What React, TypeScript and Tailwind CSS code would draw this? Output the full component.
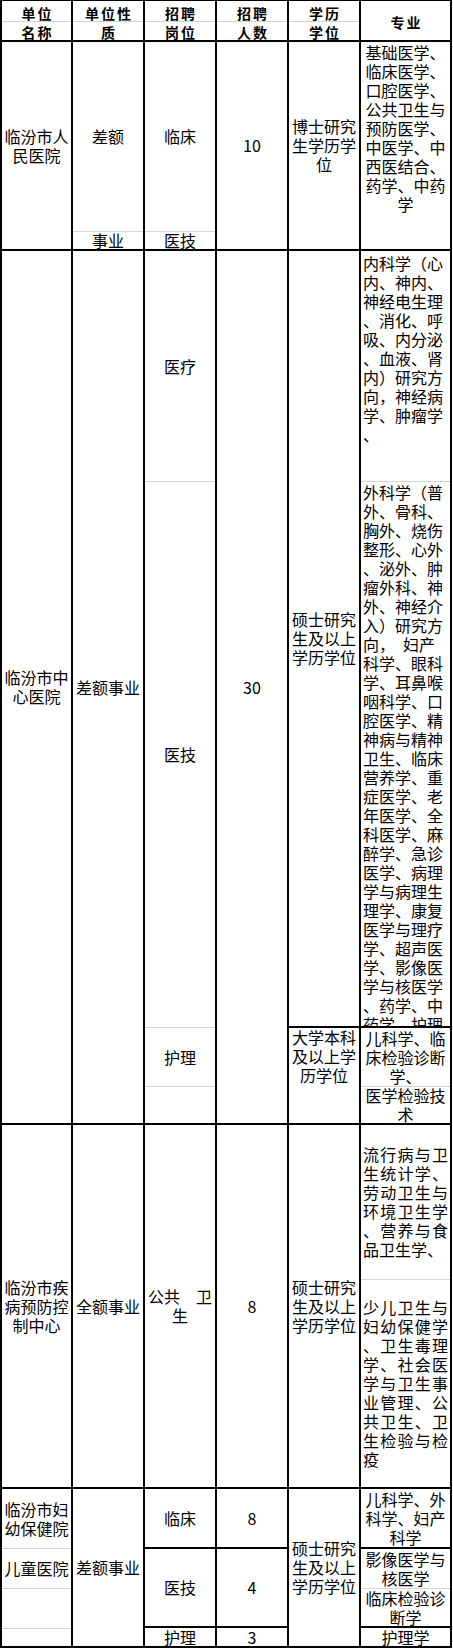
import React from 'react';

// 2px black lines come from the grid gap; 1px grey lines are borders inside cells
const grey = 'border-b border-[#d4d4d4]';

function Lines({ lines, left = false }: { lines: string[]; left?: boolean }) {
  return (
    <div className={left ? 'w-full text-left pl-[2px]' : 'w-full text-center'}>
      {lines.map((l, i) => (
        <div key={i} className="whitespace-pre">
          {l}
        </div>
      ))}
    </div>
  );
}

// Excel "distributed" alignment: every line but the last fills the cell width
function Spread({ lines }: { lines: string[] }) {
  return (
    <div className="w-full px-[2px]">
      {lines.map((l, i) =>
        i < lines.length - 1 ? (
          <div key={i} className="flex justify-between">
            {Array.from(l).map((c, j) => (
              <span key={j}>{c}</span>
            ))}
          </div>
        ) : (
          <div key={i} className="whitespace-pre">
            {l}
          </div>
        )
      )}
    </div>
  );
}

function Cell({ className = '', children }: { className?: string; children?: React.ReactNode }) {
  return (
    <div className={`bg-white overflow-hidden flex items-center justify-center ${className}`}>
      {children}
    </div>
  );
}

function Part({ className = '', children }: { className?: string; children?: React.ReactNode }) {
  return (
    <div className={`w-full shrink-0 overflow-hidden flex items-center justify-center ${className}`}>
      {children}
    </div>
  );
}

function Head({ col, top, bottom }: { col: string; top: string; bottom: string }) {
  return (
    <div className={`${col} row-start-1 bg-white flex flex-col`}>
      <div className={`h-[21px] ${grey} flex items-end justify-center pl-[2px]`}>{top}</div>
      <div className="flex-1 flex items-end justify-center pl-[2px]">{bottom}</div>
    </div>
  );
}

const master = ['硕士研究', '生及以上', '学历学位'];

export default function App() {
  return (
    <div className="w-[452px] bg-white font-['Noto_Sans_CJK_SC',sans-serif] text-black">
      <div className="grid grid-cols-[69px_70px_70px_70px_70px_89px] grid-rows-[39px_207px_775px_95px_362px_58px_77px_18px] gap-[2px] bg-black pt-[1px] px-[2px] pb-[2px] text-[16px] leading-[19px]">
        {/* header */}
        <div className="contents font-bold text-[14px] leading-[16px] tracking-[2px]">
          <Head col="col-start-1" top="单位" bottom="名称" />
          <Head col="col-start-2" top="单位性" bottom="质" />
          <Head col="col-start-3" top="招聘" bottom="岗位" />
          <Head col="col-start-4" top="招聘" bottom="人数" />
          <Head col="col-start-5" top="学历" bottom="学位" />
          <div className="col-start-6 row-start-1 bg-white flex items-center justify-center pl-[2px] pt-[3px]">
            专业
          </div>
        </div>

        {/* 临汾市人民医院 */}
        <Cell className="col-start-1 row-start-2">
          <Lines lines={['临汾市人', '民医院']} />
        </Cell>
        <Cell className="col-start-2 row-start-2 flex-col">
          <Part className={`h-[190px] ${grey}`}>差额</Part>
          <Part className="flex-1">事业</Part>
        </Cell>
        <Cell className="col-start-3 row-start-2 flex-col">
          <Part className={`h-[190px] ${grey}`}>临床</Part>
          <Part className="flex-1">医技</Part>
        </Cell>
        <Cell className="col-start-4 row-start-2">10</Cell>
        <Cell className="col-start-5 row-start-2">
          <Lines lines={['博士研究', '生学历学', '位']} />
        </Cell>
        <Cell className="col-start-6 row-start-2 items-start pt-[1px]">
          <Lines
            lines={['基础医学、', '临床医学、', '口腔医学、', '公共卫生与', '预防医学、', '中医学、中', '西医结合、', '药学、中药', '学']}
          />
        </Cell>

        {/* 临汾市中心医院 */}
        <Cell className="col-start-1 row-start-3 row-span-2">
          <Lines lines={['临汾市中', '心医院']} />
        </Cell>
        <Cell className="col-start-2 row-start-3 row-span-2">差额事业</Cell>
        <Cell className="col-start-3 row-start-3 row-span-2 flex-col justify-start">
          <Part className={`h-[231px] ${grey}`}>医疗</Part>
          <Part className={`h-[546px] ${grey}`}>医技</Part>
          <Part className={`h-[59px] ${grey}`}>护理</Part>
          <Part className="flex-1" />
        </Cell>
        <Cell className="col-start-4 row-start-3 row-span-2">30</Cell>
        <Cell className="col-start-5 row-start-3">
          <Lines lines={master} />
        </Cell>
        <Cell className="col-start-5 row-start-4 items-start">
          <Lines lines={['大学本科', '及以上学', '历学位']} />
        </Cell>
        <Cell className="col-start-6 row-start-3 flex-col justify-start">
          <Part className={`h-[231px] ${grey} items-start pt-[3px]`}>
            <Lines
              left
              lines={['内科学（心', '内、神内、', '神经电生理', '、消化、呼', '吸、内分泌', '、血液、肾', '内）研究方', '向，神经病', '学、肿瘤学', '、']}
            />
          </Part>
          <Part className="flex-1 items-start pt-[1px]">
            <Lines
              left
              lines={[
                '外科学（普', '外、骨科、', '胸外、烧伤', '整形、心外', '、泌外、肿', '瘤外科、神', '外、神经介', '入）研究方',
                '向，　妇产', '科学、眼科', '学、耳鼻喉', '咽科学、口', '腔医学、精', '神病与精神', '卫生、临床', '营养学、重',
                '症医学、老', '年医学、全', '科医学、麻', '醉学、急诊', '医学、病理', '学与病理生', '理学、康复', '医学与理疗',
                '学、超声医', '学、影像医', '学与核医学', '、药学、中', '药学、护理',
              ]}
            />
          </Part>
        </Cell>
        <Cell className="col-start-6 row-start-4 flex-col justify-start">
          <Part className={`h-[59px] ${grey}`}>
            <Lines lines={['儿科学、临', '床检验诊断', '学、']} />
          </Part>
          <Part className="flex-1">
            <Lines lines={['医学检验技', '术']} />
          </Part>
        </Cell>

        {/* 临汾市疾病预防控制中心 */}
        <Cell className="col-start-1 row-start-5">
          <Lines lines={['临汾市疾', '病预防控', '制中心']} />
        </Cell>
        <Cell className="col-start-2 row-start-5">全额事业</Cell>
        <Cell className="col-start-3 row-start-5">
          <Lines lines={['公共　卫', '生']} />
        </Cell>
        <Cell className="col-start-4 row-start-5">8</Cell>
        <Cell className="col-start-5 row-start-5">
          <Lines lines={master} />
        </Cell>
        <Cell className="col-start-6 row-start-5 flex-col justify-start">
          <Part className={`h-[155px] ${grey}`}>
            <Spread lines={['流行病与卫', '生统计学、', '劳动卫生与', '环境卫生学', '、营养与食', '品卫生学、']} />
          </Part>
          <Part className="flex-1">
            <Spread
              lines={['少儿卫生与', '妇幼保健学', '、卫生毒理', '学、社会医', '学与卫生事', '业管理、公', '共卫生、卫', '生检验与检', '疫']}
            />
          </Part>
        </Cell>

        {/* 临汾市妇幼保健院 / 儿童医院 */}
        <Cell className="col-start-1 row-start-6 row-span-3 flex-col justify-start">
          <Part className={`h-[60px] ${grey}`}>
            <Lines lines={['临汾市妇', '幼保健院']} />
          </Part>
          <Part className={`h-[40px] ${grey}`}>儿童医院</Part>
          <Part className={`h-[40px] ${grey}`} />
          <Part className="flex-1" />
        </Cell>
        <Cell className="col-start-2 row-start-6 row-span-3">差额事业</Cell>
        <Cell className="col-start-3 row-start-6">临床</Cell>
        <Cell className="col-start-3 row-start-7">医技</Cell>
        <Cell className="col-start-3 row-start-8">护理</Cell>
        <Cell className="col-start-4 row-start-6">8</Cell>
        <Cell className="col-start-4 row-start-7">4</Cell>
        <Cell className="col-start-4 row-start-8">3</Cell>
        <Cell className="col-start-5 row-start-6 row-span-3">
          <Lines lines={master} />
        </Cell>
        <Cell className="col-start-6 row-start-6">
          <Lines lines={['儿科学、外', '科学、妇产', '科学']} />
        </Cell>
        <Cell className="col-start-6 row-start-7 flex-col justify-start">
          <Part className={`h-[40px] ${grey}`}>
            <Lines lines={['影像医学与', '核医学']} />
          </Part>
          <Part className="flex-1">
            <Lines lines={['临床检验诊', '断学']} />
          </Part>
        </Cell>
        <Cell className="col-start-6 row-start-8">护理学</Cell>
      </div>
    </div>
  );
}
